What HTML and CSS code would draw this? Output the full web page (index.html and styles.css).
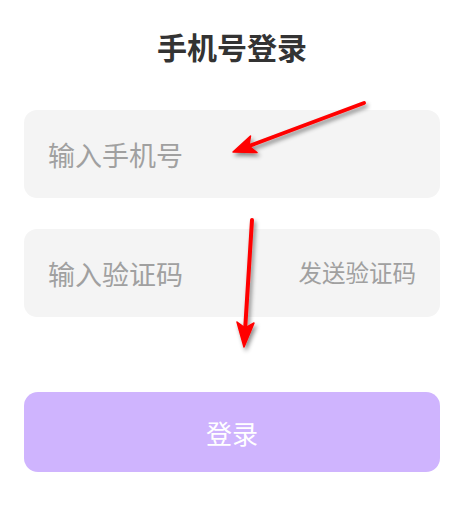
FILE: index.html
```html
<!DOCTYPE html>
<html lang="zh-CN">
<head>
<meta charset="utf-8">
<title>手机号登录</title>
<link rel="stylesheet" href="styles.css">
</head>
<body>
<main class="page">
  <h1 class="title">手机号登录</h1>
  <div class="field">
    <span class="placeholder">输入手机号</span>
  </div>
  <div class="field field-code">
    <span class="placeholder">输入验证码</span>
    <span class="send">发送验证码</span>
  </div>
  <button class="login" type="button">登录</button>
</main>
<svg class="arrows" width="457" height="516" viewBox="0 0 457 516" aria-hidden="true">
  <defs>
    <filter id="shadow" x="-20%" y="-20%" width="140%" height="140%">
      <feDropShadow dx="2" dy="3" stdDeviation="2" flood-color="#000" flood-opacity="0.45"/>
    </filter>
  </defs>
  <g filter="url(#shadow)" fill="#ff0000" stroke="#ff0000">
    <line x1="364" y1="103" x2="249" y2="146" stroke-width="4" stroke-linecap="round"/>
    <polygon points="233,152 250.5,136 248.9,146 257,152.5" stroke-width="1.5" stroke-linejoin="round"/>
    <line x1="252" y1="220" x2="245.2" y2="328" stroke-width="4" stroke-linecap="round"/>
    <polygon points="244,347 237,322 245.2,328 254,323" stroke-width="1.5" stroke-linejoin="round"/>
  </g>
</svg>
</body>
</html>
```
FILE: styles.css
```css
html, body {
  margin: 0;
  padding: 0;
  background: #ffffff;
}

body {
  font-family: "Noto Sans CJK SC", "Noto Sans", sans-serif;
  position: relative;
  width: 457px;
  height: 516px;
  overflow: hidden;
}

.page {
  display: flex;
  flex-direction: column;
  padding: 26px 17px 0 24px;
}

.title {
  margin: 0;
  height: 40px;
  line-height: 40px;
  font-size: 30px;
  font-weight: 700;
  color: #333333;
  text-align: center;
}

.field {
  margin-top: 44px;
  height: 88px;
  border-radius: 13px;
  background: #f4f4f4;
  display: flex;
  align-items: center;
  justify-content: space-between;
  padding: 0 24px 0 24px;
}

.field-code {
  margin-top: 31px;
}

.placeholder {
  font-size: 27px;
  color: #a0a0a0;
  line-height: 1;
}

.send {
  font-size: 23.5px;
  color: #a0a0a0;
  line-height: 1;
}

.login {
  margin-top: 75px;
  height: 80px;
  border: none;
  border-radius: 14px;
  background: #cfb4fe;
  color: #ffffff;
  font-family: "Noto Sans CJK SC", "Noto Sans", sans-serif;
  font-size: 26px;
  padding: 0;
}

.arrows {
  position: absolute;
  left: 0;
  top: 0;
  pointer-events: none;
}
```
